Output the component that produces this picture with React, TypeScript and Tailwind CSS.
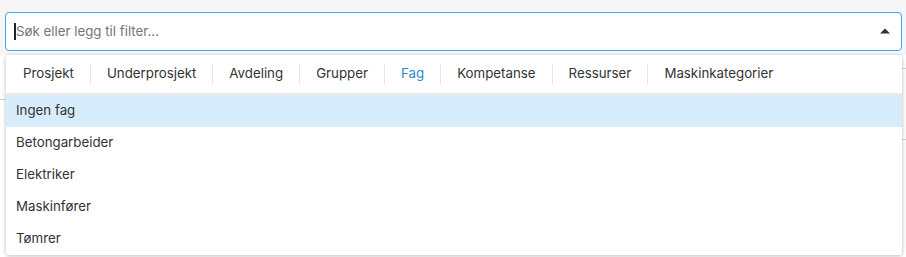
import React from "react";

const tabs = [
  "Prosjekt",
  "Underprosjekt",
  "Avdeling",
  "Grupper",
  "Fag",
  "Kompetanse",
  "Ressurser",
  "Maskinkategorier",
];

const items = ["Ingen fag", "Betongarbeider", "Elektriker", "Maskinfører", "Tømrer"];

function App() {
  const active = "Fag";
  return (
    <div className="relative h-[257px] w-[906px] bg-white font-['Inter',sans-serif] text-[13.3px] text-[#333]">
      {/* page behind the menu */}
      <div className="h-[55px] bg-[#f6f6f6]" />
      <div className="flex justify-between">
        <div className="mt-[44px] h-px w-[6px] bg-[#d4d4d4]" />
        <div className="mt-[13px] h-[72px] w-[4px] border-y border-[#d4d4d4]" />
      </div>

      <div className="absolute left-[5px] top-[12px] w-[897px]">
        <div className="flex h-[39px] items-center rounded-[4px] border border-[#42a5f5] bg-white pl-[8px] pr-[11px]">
          <span className="h-[17px] w-[2px] bg-[#222]" />
          <span className="flex-1 text-[#757575]">Søk eller legg til filter...</span>
          <svg width="10" height="6" viewBox="0 0 10 6" className="mb-[1px]">
            <path d="M0 5.5 L5 0.5 L10 5.5 Z" fill="#333" />
          </svg>
        </div>

        <div className="ml-[1px] mt-[4px] w-[896px] overflow-hidden rounded-[3px] bg-white shadow-[0_1px_4px_rgba(0,0,0,0.28)]">
          <div className="flex h-[40px] items-center border-b-2 border-[#ececec] pl-[1px]">
            {tabs.map((t, i) => (
              <div key={t} className="flex items-center">
                {i > 0 && <span className="h-[21px] w-px bg-[#e6e6e6]" />}
                <span className={"px-4 " + (t === active ? "text-[#2f86c9]" : "text-[#333]")}>{t}</span>
              </div>
            ))}
          </div>
          <div className="flex flex-col">
            {items.map((it, i) => (
              <div
                key={it}
                className={
                  "flex h-[32px] items-center px-[10px] " + (i === 0 ? "bg-[#d8edfc]" : "bg-white")
                }
              >
                {it}
              </div>
            ))}
          </div>
        </div>
      </div>
    </div>
  );
}

export default App;
